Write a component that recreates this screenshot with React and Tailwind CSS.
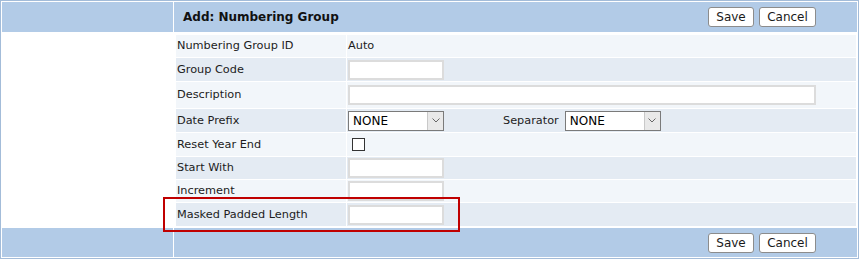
import React from "react";

const font = { fontFamily: '"DejaVu Sans", Verdana, sans-serif' };

function Btn({ children, w }) {
  return (
    <div
      className={`h-[20px] ${w} flex items-center justify-center rounded-[3px] border border-[#8c8c8c] bg-white text-[12px] text-[#1a1a1a]`}
    >
      {children}
    </div>
  );
}

function Buttons() {
  return (
    <div className="flex gap-[5px]">
      <Btn w="w-[46px]">Save</Btn>
      <Btn w="w-[57px]">Cancel</Btn>
    </div>
  );
}

function TextInput({ w }) {
  return <div className={`${w} h-[20px] border-2 border-[#dcdcdc] bg-white`} />;
}

function Select() {
  return (
    <div className="w-[96px] h-[20px] border border-[#7a7a7a] bg-white flex">
      <div className="flex-1 flex items-center pl-[4px] text-[12px] text-[#000]">NONE</div>
      <div className="w-[16px] bg-[#e9e9e9] border-l border-[#c9c9c9] flex items-center justify-center">
        <svg width="8" height="5" viewBox="0 0 8 5">
          <path d="M0.5 0.5 L4 4 L7.5 0.5" fill="none" stroke="#666" strokeWidth="1" />
        </svg>
      </div>
    </div>
  );
}

function Row({ label, h, dark, children }) {
  const bg = dark ? "bg-[#e4ebf3]" : "bg-[#f2f6fa]";
  return (
    <div className={`flex gap-px ${h}`}>
      <div className={`w-[170px] ${bg} pl-px pt-px flex items-center text-[11.3px] text-[#1c1c1c]`}>{label}</div>
      <div className={`flex-1 ${bg} pl-px flex items-center`}>{children}</div>
    </div>
  );
}

export default function App() {
  return (
    <div style={font} className="relative w-[859px] h-[259px] border border-[#a3bcd9] p-px bg-white flex flex-col">
      <div className="flex gap-px h-[30px]">
        <div className="w-[171px] bg-[#b2cbe7]" />
        <div className="flex-1 bg-[#b2cbe7] flex items-center justify-between pl-[9px] pr-[41px]">
          <span className="font-bold text-[12px] text-[#111]">Add: Numbering Group</span>
          <Buttons />
        </div>
      </div>

      <div className="flex mt-[3px]">
        <div className="w-[174px]" />
        <div className="flex-1 mr-px flex flex-col gap-px">
          <Row label="Numbering Group ID" h="h-[22px]">
            <span className="pt-px text-[11.3px] text-[#1c1c1c]">Auto</span>
          </Row>
          <Row label="Group Code" h="h-[23px]" dark>
            <TextInput w="w-[96px]" />
          </Row>
          <Row label="Description" h="h-[26px]">
            <TextInput w="w-[468px]" />
          </Row>
          <Row label="Date Prefix" h="h-[23px]" dark>
            <Select />
            <span className="ml-[59px] mr-[6px] pt-px text-[11.3px] text-[#1c1c1c]">Separator</span>
            <Select />
          </Row>
          <Row label="Reset Year End" h="h-[23px]">
            <div className="ml-[4px] w-[13px] h-[13px] border border-[#333] bg-white" />
          </Row>
          <Row label="Start With" h="h-[22px]" dark>
            <TextInput w="w-[96px]" />
          </Row>
          <Row label="Increment" h="h-[22px]">
            <TextInput w="w-[96px]" />
          </Row>
          <Row label="Masked Padded Length" h="h-[23px]" dark>
            <TextInput w="w-[96px]" />
          </Row>
        </div>
      </div>

      <div className="flex gap-px h-[29px] mt-[2px]">
        <div className="w-[171px] bg-[#b2cbe7]" />
        <div className="flex-1 bg-[#b2cbe7] flex items-center justify-end pr-[41px]">
          <Buttons />
        </div>
      </div>

      <div className="absolute left-[162px] top-[196px] w-[297px] h-[35px] border-2 border-[#c00000]" />
    </div>
  );
}
